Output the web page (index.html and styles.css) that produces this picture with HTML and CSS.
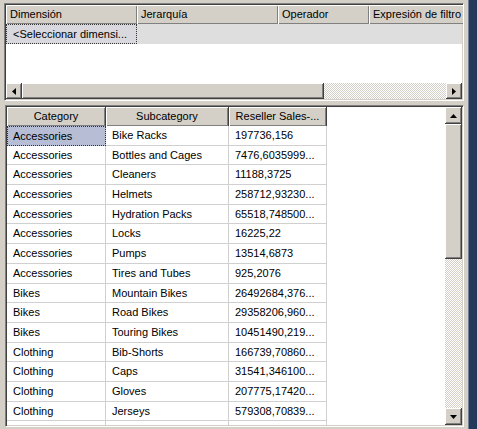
FILE: index.html
```html
<!DOCTYPE html>
<html>
<head>
<meta charset="utf-8">
<link rel="stylesheet" href="styles.css">
</head>
<body>
<div class="main">
  <div class="box top-box">
    <div class="filter-head">
      <div class="hcell hc1">Dimensión</div>
      <div class="hcell hc2">Jerarquía</div>
      <div class="hcell hc3">Operador</div>
      <div class="hcell hc4">Expresión de filtro</div>
    </div>
    <div class="filter-row">
      <div class="sel-dim">&lt;Seleccionar dimensi...</div>
    </div>
    <div class="filter-empty"></div>
    <div class="hscroll">
      <div class="sbtn"><svg width="4" height="7" viewBox="0 0 4 7"><path d="M4 0V7L0 3.5Z" fill="#000"/></svg></div>
      <div class="hthumb"></div>
      <div class="track"></div>
      <div class="sbtn"><svg width="4" height="7" viewBox="0 0 4 7"><path d="M0 0V7L4 3.5Z" fill="#000"/></svg></div>
    </div>
  </div>
  <div class="box bottom-box">
    <div class="grid">
      <div class="grow ghead">
        <div class="gh">Category</div>
        <div class="gh">Subcategory</div>
        <div class="gh">Reseller Sales-...</div>
        <div class="gblank"></div>
      </div>
      <div class="grow"><div class="gc selected">Accessories</div><div class="gc">Bike Racks</div><div class="gc">197736,156</div><div class="gblank"></div></div>
      <div class="grow"><div class="gc">Accessories</div><div class="gc">Bottles and Cages</div><div class="gc">7476,6035999...</div><div class="gblank"></div></div>
      <div class="grow"><div class="gc">Accessories</div><div class="gc">Cleaners</div><div class="gc">11188,3725</div><div class="gblank"></div></div>
      <div class="grow"><div class="gc">Accessories</div><div class="gc">Helmets</div><div class="gc">258712,93230...</div><div class="gblank"></div></div>
      <div class="grow"><div class="gc">Accessories</div><div class="gc">Hydration Packs</div><div class="gc">65518,748500...</div><div class="gblank"></div></div>
      <div class="grow"><div class="gc">Accessories</div><div class="gc">Locks</div><div class="gc">16225,22</div><div class="gblank"></div></div>
      <div class="grow"><div class="gc">Accessories</div><div class="gc">Pumps</div><div class="gc">13514,6873</div><div class="gblank"></div></div>
      <div class="grow"><div class="gc">Accessories</div><div class="gc">Tires and Tubes</div><div class="gc">925,2076</div><div class="gblank"></div></div>
      <div class="grow"><div class="gc">Bikes</div><div class="gc">Mountain Bikes</div><div class="gc">26492684,376...</div><div class="gblank"></div></div>
      <div class="grow"><div class="gc">Bikes</div><div class="gc">Road Bikes</div><div class="gc">29358206,960...</div><div class="gblank"></div></div>
      <div class="grow"><div class="gc">Bikes</div><div class="gc">Touring Bikes</div><div class="gc">10451490,219...</div><div class="gblank"></div></div>
      <div class="grow"><div class="gc">Clothing</div><div class="gc">Bib-Shorts</div><div class="gc">166739,70860...</div><div class="gblank"></div></div>
      <div class="grow"><div class="gc">Clothing</div><div class="gc">Caps</div><div class="gc">31541,346100...</div><div class="gblank"></div></div>
      <div class="grow"><div class="gc">Clothing</div><div class="gc">Gloves</div><div class="gc">207775,17420...</div><div class="gblank"></div></div>
      <div class="grow"><div class="gc">Clothing</div><div class="gc">Jerseys</div><div class="gc">579308,70839...</div><div class="gblank"></div></div>
      <div class="grow"><div class="gc"></div><div class="gc"></div><div class="gc"></div><div class="gblank"></div></div>
    </div>
    <div class="vscroll">
      <div class="sbtn vbtn"><svg width="7" height="4" viewBox="0 0 7 4"><path d="M0 4H7L3.5 0Z" fill="#000"/></svg></div>
      <div class="vthumb"></div>
      <div class="track"></div>
      <div class="sbtn vbtn"><svg width="7" height="4" viewBox="0 0 7 4"><path d="M0 0H7L3.5 4Z" fill="#000"/></svg></div>
    </div>
  </div>
</div>
<div class="strip"></div>
</body>
</html>
```

FILE: styles.css
```css
html, body {
  margin: 0;
  padding: 0;
}
body {
  width: 477px;
  height: 429px;
  overflow: hidden;
  background: #d4d0c8;
  display: flex;
  font-family: "Liberation Sans", Arial, sans-serif;
  font-size: 11px;
  color: #000;
}
.main {
  width: 468px;
  display: flex;
  flex-direction: column;
}
.strip {
  flex: 1;
  background: #23385a;
  border-left: 1px solid #6f7f95;
}
.box {
  box-sizing: border-box;
  border-top: 1px solid #808080;
  border-left: 1px solid #808080;
  border-right: 1px solid #ffffff;
  border-bottom: 1px solid #ffffff;
  box-shadow: inset 1px 1px 0 #404040, inset -1px -1px 0 #d4d0c8;
  padding: 1px;
  background: #fff;
  overflow: hidden;
}
.top-box {
  margin: 3px 0 0 4px;
  width: 460px;
  height: 98px;
  display: flex;
  flex-direction: column;
}
.filter-head {
  display: flex;
  height: 19px;
  flex: none;
}
.hcell {
  box-sizing: border-box;
  height: 19px;
  line-height: 18px;
  padding-left: 4px;
  background: #d4d0c8;
  white-space: nowrap;
  overflow: hidden;
  box-shadow: inset 1px 1px 0 #fff, inset -1px -1px 0 #808080;
  flex: none;
}
.hc1 { width: 131px; }
.hc2 { width: 141px; }
.hc3 { width: 91px; }
.hc4 { width: 100px; }
.filter-row {
  height: 20px;
  flex: none;
  background: #dedede;
  display: flex;
}
.sel-dim {
  box-sizing: border-box;
  width: 131px;
  height: 20px;
  line-height: 18px;
  padding-left: 6px;
  border: 1px dotted #333;
  background: #d8d8de;
  white-space: nowrap;
}
.filter-empty {
  flex: 1;
  background: #fff;
}
.hscroll {
  height: 16px;
  flex: none;
  display: flex;
  background: #d4d0c8;
}
.sbtn {
  width: 16px;
  height: 16px;
  flex: none;
  box-sizing: border-box;
  background: #d4d0c8;
  box-shadow: inset -1px -1px 0 #404040, inset 1px 1px 0 #ffffff, inset -2px -2px 0 #808080;
  display: flex;
  align-items: center;
  justify-content: center;
}
.hthumb {
  width: 302px;
  flex: none;
  background: #d4d0c8;
  box-shadow: inset -1px -1px 0 #404040, inset 1px 1px 0 #ffffff, inset -2px -2px 0 #808080;
}
.track {
  flex: 1;
  background: repeating-conic-gradient(#d4d0c8 0 25%, #ffffff 0 50%) 0 0 / 2px 2px;
}
.bottom-box {
  margin: 4px 0 0 5px;
  width: 459px;
  height: 322px;
  display: flex;
}
.grid {
  flex: 1;
  overflow: hidden;
  background: #fff;
}
.grow {
  display: grid;
  grid-template-columns: 99px 123px 98px 1fr;
  height: 19.7px;
}
.ghead {
  height: 19px;
}
.gh {
  box-sizing: border-box;
  background: #d4d0c8;
  text-align: center;
  line-height: 18px;
  white-space: nowrap;
  overflow: hidden;
  box-shadow: inset 1px 1px 0 #fff, inset -1px -1px 0 #808080;
  border-right: 1px solid #404040;
}
.gc {
  box-sizing: border-box;
  border-right: 1px solid #d0d0d0;
  border-bottom: 1px solid #d0d0d0;
  padding-left: 6px;
  line-height: 18px;
  white-space: nowrap;
  overflow: hidden;
}
.gblank {
  background: #fff;
}
.selected {
  background: #b6bdd4;
  border: 1px dotted #333;
  padding-left: 5px;
}
.vscroll {
  width: 17px;
  flex: none;
  display: flex;
  flex-direction: column;
  background: #d4d0c8;
}
.vbtn {
  width: 17px;
  height: 17px;
}
.vthumb {
  height: 135px;
  flex: none;
  background: #d4d0c8;
  box-shadow: inset -1px -1px 0 #404040, inset 1px 1px 0 #ffffff, inset -2px -2px 0 #808080;
}
```
